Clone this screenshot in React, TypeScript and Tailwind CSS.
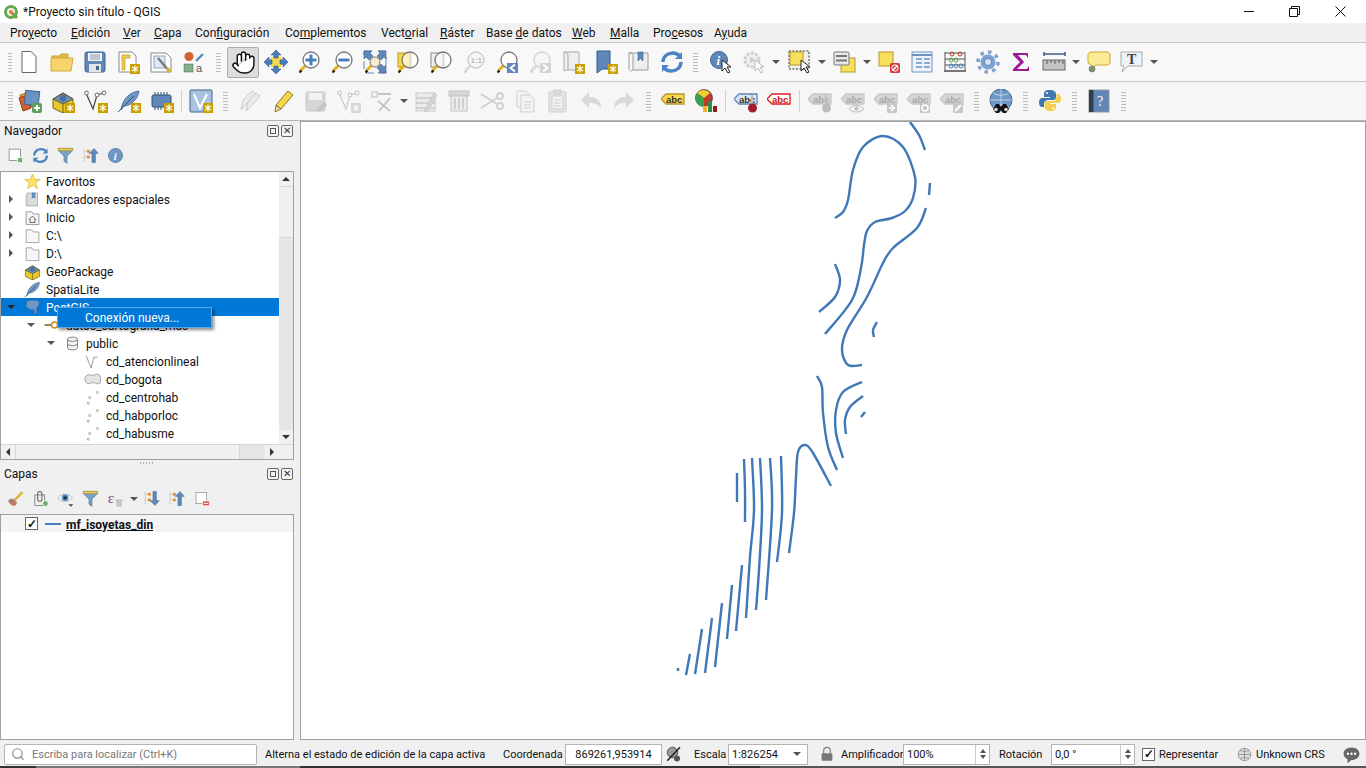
import type { ReactNode } from 'react'
import { Hand, Search } from 'lucide-react'

const FONT = "font-['Roboto','Noto_Sans',sans-serif]"

function smooth(p: number[][]) {
  let d = `M${p[0][0]} ${p[0][1]}`
  for (let i = 0; i < p.length - 1; i++) {
    const a = p[Math.max(i - 1, 0)]
    const b = p[i]
    const c = p[i + 1]
    const e = p[Math.min(i + 2, p.length - 1)]
    d += ` C${b[0] + (c[0] - a[0]) / 6} ${b[1] + (c[1] - a[1]) / 6} ${c[0] - (e[0] - b[0]) / 6} ${c[1] - (e[1] - b[1]) / 6} ${c[0]} ${c[1]}`
  }
  return d
}

const isolines = [
  [[835, 218], [843, 212], [848, 200], [853, 170], [863, 147], [883, 136], [903, 147], [915, 177], [913, 198], [905, 211], [892, 218], [875, 222], [867, 231], [864, 245], [861, 268], [852, 300], [825, 334]],
  [[910, 122], [919, 135], [925, 150]],
  [[930, 183], [929, 195]],
  [[926, 208], [917, 228], [893, 248], [883, 263], [867, 297], [847, 330], [842, 350], [848, 365], [862, 365]],
  [[835, 264], [840, 280], [835, 297], [819, 312]],
  [[877, 322], [873, 330], [874, 337]],
  [[817, 376], [822, 387], [823, 413], [828, 447], [837, 470]],
  [[862, 382], [843, 392], [836, 410], [836, 433], [843, 458]],
  [[863, 396], [850, 407], [845, 420], [846, 434]],
  [[865, 412], [861, 417]],
  [[831, 486], [813, 453], [805, 445], [798, 452], [796, 477], [794, 513], [789, 553]],
  [[737, 473], [737, 502]],
  [[744, 459], [745, 490], [745, 522]],
  [[752, 458], [754, 510], [750, 557], [746, 618]],
  [[760, 458], [762, 510], [759, 570], [756, 610]],
  [[770, 458], [772, 510], [766, 600]],
  [[781, 456], [782, 513], [777, 562]],
  [[742, 565], [736, 631]],
  [[732, 585], [727, 639]],
  [[722, 603], [715, 667]],
  [[712, 618], [705, 673]],
  [[702, 629], [695, 674]],
  [[690, 654], [686, 675]],
  [[678, 668], [678, 671]],
]

const Badge = ({ c = '#c9a000' }: { c?: string }) => (
  <g>
    <rect x="14" y="14" width="10" height="10" fill={c} />
    <path d="M19 15.5v7M16 17l6 4M22 17l-6 4" stroke="#fff" strokeWidth="1.2" />
  </g>
)

const Lens = ({ fill = '#fff', ring = '#777', handle = '#e8b020', tip = '#111' }) => (
  <g>
    <path d="M9 15 3 21" stroke={handle} strokeWidth="3" />
    <path d="M4.5 20.5 2.5 22.5" stroke={tip} strokeWidth="2" />
    <circle cx="14" cy="10" r="8" fill={fill} stroke={ring} strokeWidth="1.3" />
  </g>
)

const Cursor = () => <path d="M13 10v11l3-3 3 5 2-1-3-5h4z" fill="#fff" stroke="#222" strokeWidth="1" />

const Abc = ({ fill, stroke, color = '#333' }: { fill: string; stroke: string; color?: string }) => (
  <g>
    <path d="M0 10 5 5h18v10H5z" fill={fill} stroke={stroke} strokeWidth="1.3" />
    <text x="5" y="13.5" fontSize="9.5" fontWeight="700" fill={color} fontFamily="Liberation Sans, sans-serif">abc</text>
  </g>
)

const Vnodes = ({ c = '#444', n = '#888' }) => (
  <g fill="#fff" stroke={c} strokeWidth="1.2">
    <path d="M2 4 9 20 13 6 20 4" fill="none" />
    <circle cx="2.5" cy="4" r="1.8" stroke={n} />
    <circle cx="13" cy="6" r="1.8" stroke={n} />
    <circle cx="20" cy="4" r="1.8" stroke={n} />
  </g>
)

const Feather = ({ c = '#6f97c6' }) => (
  <g>
    <path d="M4 21C5 11 12 3 22 2 21 10 14 17 7 17Z" fill={c} stroke="#3e668f" strokeWidth=".8" />
    <path d="M1 23 17 7" stroke="#2e4f72" strokeWidth="1" />
  </g>
)

const GeoBox = () => (
  <g>
    <path d="M2 10 12 4l10 6v9l-10 5-10-5z" fill="#e7c92c" stroke="#7a6510" />
    <path d="M2 10l10 5 10-5-10-6z" fill="#6d8fb8" stroke="#4a3d10" strokeWidth=".7" />
    <path d="M12 15v9" stroke="#7a6510" />
    <circle cx="12" cy="9" r="3.4" fill="#4a6f9d" />
  </g>
)

const gray = { f: '#ececec', s: '#c9c9c9', d: '#d6d6d6' }

const icons: Record<string, ReactNode> = {
  new: <path d="M5 1.5h9l5 5v16H5z" fill="#fff" stroke="#666" />,
  open: (
    <g>
      <path d="M2 6h7l2-2h7v4H2z" fill="#e6bc3f" stroke="#c9a53a" />
      <path d="M1 21V8h22l-2 13z" fill="#f7d56b" stroke="#d0aa40" />
    </g>
  ),
  save: (
    <g>
      <rect x="2" y="2" width="20" height="20" rx="2" fill="#5f88b8" stroke="#3f6690" />
      <rect x="5" y="3" width="14" height="8" fill="#eef1f5" />
      <path d="M7 5h10M7 7h10M7 9h10" stroke="#8b9bb0" />
      <rect x="6" y="14" width="12" height="8" fill="#e4e4e4" />
      <rect x="13" y="16" width="3" height="4" fill="#3f6690" />
    </g>
  ),
  layoutNew: (
    <g>
      <path d="M3 2h13l4 4v16H3z" fill="#fff" stroke="#888" />
      <path d="M6 5h8v3H9v12H6z" fill="#f0ce50" stroke="#b8962a" strokeWidth=".7" />
      <Badge />
    </g>
  ),
  layoutMgr: (
    <g>
      <path d="M2 3h15l5 5v14H2z" fill="#fff" stroke="#888" />
      <rect x="5" y="6" width="11" height="12" fill="#dfe9f5" stroke="#8aa6c8" />
      <path d="M9 8 20 21" stroke="#777" strokeWidth="2.4" />
      <path d="M18 18l4 4" stroke="#dcb63c" strokeWidth="3" />
    </g>
  ),
  style: (
    <g>
      <circle cx="7" cy="6.5" r="4.5" fill="#d2622f" />
      <path d="M14 11 21 4" stroke="#5f88b8" strokeWidth="2.4" />
      <rect x="2" y="14" width="9" height="8" fill="#7fb08a" stroke="#557" strokeWidth=".5" />
      <text x="14" y="22" fontSize="11" fill="#555" fontFamily="Liberation Sans, sans-serif">a</text>
    </g>
  ),
  panSel: (
    <g>
      <path d="M12 4 20 12 12 20 4 12z" fill="#f6d94a" stroke="#b8962a" />
      <rect x="7" y="7" width="10" height="10" fill="#f6d94a" />
      <path d="M12 0l5 5h-3v3h-4V5H7zM12 24l5-5h-3v-3h-4v3H7zM0 12l5-5v3h3v4H5v3zM24 12l-5-5v3h-3v4h3v3z" fill="#4a7fbe" stroke="#2f5c8c" strokeWidth=".6" />
    </g>
  ),
  zoomIn: (
    <g>
      <Lens />
      <path d="M8.5 10h11M14 4.500v11" stroke="#4a7fbe" strokeWidth="3" />
    </g>
  ),
  zoomOut: (
    <g>
      <Lens />
      <path d="M8.5 10h11" stroke="#4a7fbe" strokeWidth="3" />
    </g>
  ),
  zoomFull: (
    <g>
      <rect x="1" y="1" width="22" height="22" fill="none" stroke="#5f88b8" strokeWidth="1" strokeDasharray="8 6" />
      <path d="M1 1h8L7 3l3 3-4 4-3-3-2 2zM23 1h-8l2 2-3 3 4 4 3-3 2 2zM23 23h-8l2-2-3-3 4-4 3 3 2-2z" fill="#5f88b8" stroke="#3f6690" strokeWidth=".6" />
      <path d="M9 15 3 21" stroke="#e8b020" strokeWidth="3" />
      <path d="M4.500 20.500 2.500 22.500" stroke="#111" strokeWidth="2" />
      <circle cx="12" cy="12" r="5" fill="#f3eccd" stroke="#777" />
    </g>
  ),
  zoomSel: (
    <g>
      <rect x="2" y="3" width="13" height="14" fill="#f6d94a" stroke="#b8962a" />
      <Lens fill="#ffffffaa" />
      <path d="M14 3v14" stroke="#ccc" />
    </g>
  ),
  zoomLayer: (
    <g>
      <rect x="2" y="3" width="13" height="14" fill="#eee" stroke="#888" />
      <Lens fill="#ffffffaa" />
      <path d="M14 3v14" stroke="#ccc" />
    </g>
  ),
  zoom11: (
    <g>
      <Lens fill="#f6f6f6" ring="#c8c8c8" handle="#ddd" tip="#ccc" />
      <text x="8.5" y="13" fontSize="8" fontWeight="700" fill="#bbb" fontFamily="Liberation Sans, sans-serif">1:1</text>
    </g>
  ),
  zoomLast: (
    <g>
      <Lens />
      <rect x="12" y="13" width="11" height="10" fill="#5f88b8" />
      <path d="M20 14.500 15.500 18l4.500 3.500" fill="none" stroke="#fff" strokeWidth="2" />
    </g>
  ),
  zoomNext: (
    <g>
      <Lens fill="#f6f6f6" ring="#d0d0d0" handle="#ddd" tip="#ccc" />
      <rect x="12" y="13" width="11" height="10" fill="#d4d4d4" />
      <path d="M15 14.500 19.500 18 15 21.500" fill="none" stroke="#fff" strokeWidth="2" />
    </g>
  ),
  mapNew: (
    <g>
      <path d="M3 2h15v18H7c-3 0-4 2-4 0z" fill="#eee" stroke="#aaa" />
      <path d="M3 2c3 0 4 2 4 4v14" fill="none" stroke="#aaa" />
      <Badge />
    </g>
  ),
  bmNew: (
    <g>
      <path d="M3 1h13v18H8l-5 4z" fill="#5f88b8" stroke="#2f5c8c" />
      <Badge />
    </g>
  ),
  bookmarks: (
    <g>
      <path d="M2 3c3-1 4 1 4 3v14h15V3z" fill="#eee" stroke="#999" />
      <path d="M2 3v15c0 2 2 4 4 2" fill="none" stroke="#999" />
      <path d="M11 2h5v9l-2.500-2.500L11 11z" fill="#5f88b8" stroke="#3f6690" strokeWidth=".6" />
    </g>
  ),
  refresh: (
    <g fill="none" stroke="#4a84c4" strokeWidth="3.400">
      <path d="M3 12C3 6 8 3 13 3c3 0 5 1 7 3" />
      <path d="M21 12c0 6-5 9-10 9-3 0-5-1-7-3" />
      <path d="M22 2v7h-7zM2 22v-7h7z" fill="#4a84c4" stroke="none" />
    </g>
  ),
  identify: (
    <g>
      <circle cx="10" cy="10" r="8.500" fill="#5f88b8" stroke="#3f6690" />
      <text x="7.500" y="15" fontSize="13" fontWeight="700" fontStyle="italic" fill="#fff" fontFamily="Liberation Serif, serif">i</text>
      <Cursor />
    </g>
  ),
  action: (
    <g>
      <circle cx="10" cy="10" r="7" fill="#eee" stroke="#d0d0d0" strokeWidth="3" strokeDasharray="3 1.500" />
      <path d="M8 6.500v7l5-3.500z" fill="#ccc" />
      <path d="M13 10v11l3-3 3 5 2-1-3-5h4z" fill="#fff" stroke="#bbb" />
    </g>
  ),
  select: (
    <g>
      <rect x="1" y="1" width="20" height="18" fill="#f0f0f0" stroke="#333" strokeDasharray="2 1.500" />
      <rect x="2" y="2" width="13" height="13" fill="#f6e05a" stroke="#b8962a" />
      <Cursor />
    </g>
  ),
  form: (
    <g>
      <rect x="8" y="8" width="14" height="14" fill="#f6e05a" stroke="#b8962a" />
      <rect x="1" y="2" width="15" height="13" rx="1" fill="#e9e9e9" stroke="#777" />
      <path d="M3 6h11M3 10.500h11" stroke="#777" strokeWidth="2" />
    </g>
  ),
  deselect: (
    <g>
      <rect x="2" y="2" width="14" height="14" fill="#f6e05a" stroke="#b8962a" />
      <rect x="13" y="13" width="10" height="10" rx="1.500" fill="#d83a3a" />
      <path d="M15.500 20.500l5-5" stroke="#fff" strokeWidth="1.600" />
      <circle cx="18" cy="18" r="3.200" fill="none" stroke="#fff" />
    </g>
  ),
  table: (
    <g>
      <rect x="2" y="2" width="20" height="20" fill="#eef3f9" stroke="#6a93c1" />
      <path d="M2 5h20" stroke="#6a93c1" strokeWidth="2" />
      <path d="M6 9h6M14 9h6M6 13h6M14 13h6M6 17h6M14 17h6" stroke="#6a93c1" strokeWidth="1.400" />
    </g>
  ),
  abacus: (
    <g fill="none">
      <path d="M2 2v18M22 2v18M2 3h20M2 9h20M2 15h20" stroke="#555" />
      <rect x="1" y="20" width="22" height="2" fill="#777" />
      <circle cx="9" cy="4" r="2" stroke="#c0392b" />
      <circle cx="17" cy="4" r="2" stroke="#c0392b" />
      <circle cx="8" cy="10" r="2" stroke="#5aa05a" />
      <circle cx="13" cy="10" r="2" stroke="#5aa05a" />
      <circle cx="8" cy="16" r="2" stroke="#4a7fbe" />
      <circle cx="13" cy="16" r="2" stroke="#4a7fbe" />
      <circle cx="18" cy="16" r="2" stroke="#4a7fbe" />
    </g>
  ),
  gear: (
    <g>
      <circle cx="12" cy="12" r="7.500" fill="#7ea2d0" />
      <circle cx="12" cy="12" r="10" fill="none" stroke="#7ea2d0" strokeWidth="3.500" strokeDasharray="3.500 4.300" />
      <circle cx="12" cy="12" r="3.500" fill="#dce7f5" stroke="#5f88b8" />
    </g>
  ),
  sigma: <path d="M4 3h15v5l-2-3H9l6 7-7 7h10l2-3v5H4v-2l7-7-7-7z" fill="#a0189a" />,
  ruler: (
    <g>
      <path d="M2 4h21M2 2v4M23 2v4" stroke="#3f5f88" strokeWidth="1.500" />
      <rect x="1" y="10" width="22" height="10" fill="#c4c4c4" stroke="#666" />
      <path d="M5 10v4M9 10v3M13 10v4M17 10v3M21 10v4" stroke="#555" />
    </g>
  ),
  bubble: (
    <g>
      <path d="M3 2h18l2 2v9l-2 2H9l-3 2-2-2-3-2V4z" fill="#fbeb96" stroke="#cfa82e" />
      <circle cx="5" cy="19" r="3" fill="#7a9a6a" stroke="#557" strokeWidth=".5" />
    </g>
  ),
  textAnn: (
    <g>
      <path d="M1 2h21v14H8l-6 6 2-6H1z" fill="#eef3f7" stroke="#aaa" />
      <text x="7" y="14" fontSize="14" fontWeight="700" fill="#444" fontFamily="Liberation Serif, serif">T</text>
    </g>
  ),
  dsm: (
    <g>
      <path d="M2 6 12 3l3 14-9 4z" fill="#e2a43c" stroke="#a06a1c" />
      <path d="M1 9l9-3 3 13-8 3z" fill="#d2622f" stroke="#8f3d15" />
      <rect x="7" y="2" width="14" height="14" fill="#6a93c1" stroke="#3f6690" transform="rotate(6 14 9)" />
      <rect x="14" y="14" width="10" height="10" rx="2" fill="#5aa05a" />
      <path d="M19 16v6M16 19h6" stroke="#fff" strokeWidth="2" />
    </g>
  ),
  gpkgNew: (
    <g>
      <GeoBox />
      <Badge />
    </g>
  ),
  shpNew: (
    <g>
      <Vnodes />
      <Badge />
    </g>
  ),
  spatNew: (
    <g>
      <Feather />
      <Badge />
    </g>
  ),
  tempNew: (
    <g>
      <rect x="2" y="6" width="19" height="12" rx="1.500" fill="#5f88b8" stroke="#2f4f72" />
      <path d="M5 3v3M8 3v3M11 3v3M14 3v3M17 3v3M5 18v3M8 18v3M11 18v3" stroke="#2f4f72" />
      <Badge />
    </g>
  ),
  virtNew: (
    <g>
      <rect x="1" y="1" width="22" height="22" rx="1" fill="#a9c3df" stroke="#3f6690" />
      <path d="M5 5 11 19 18 5" fill="none" stroke="#fff" strokeWidth="2" />
      <Badge />
    </g>
  ),
  pencils: (
    <g fill={gray.f} stroke={gray.s}>
      <path d="M3 21 5 11l9-9 4 3-9 9z" />
      <path d="M8 22l2-9 8-9 4 3-8 9z" />
    </g>
  ),
  pencil: (
    <g>
      <path d="M5 16 17 2l5 4-12 14z" fill="#f3d64a" stroke="#8a7a20" />
      <path d="M5 16l5 4-6 3z" fill="#e9d9b0" stroke="#8a7a20" />
    </g>
  ),
  saveG: (
    <g>
      <rect x="2" y="3" width="19" height="19" rx="1.500" fill={gray.d} stroke={gray.s} />
      <rect x="5" y="4" width="13" height="7" fill="#f2f2f2" />
      <path d="M12 21l8-8 3 3-8 7z" fill="#c4c4c4" />
    </g>
  ),
  vG: (
    <g>
      <Vnodes c={gray.s} n={gray.s} />
      <rect x="14" y="14" width="10" height="10" fill={gray.d} />
      <path d="M19 15.500v7M16 17l6 4M22 17l-6 4" stroke="#fff" />
    </g>
  ),
  toolG: (
    <g fill="none" stroke="#c4c4c4" strokeWidth="1.200">
      <rect x="2" y="3" width="5" height="5" />
      <path d="M8 5h13M8 12l12 10M20 9 9 22" strokeWidth="1.800" />
    </g>
  ),
  tableG: (
    <g>
      <rect x="2" y="4" width="19" height="18" fill={gray.f} stroke={gray.s} />
      <path d="M2 9h19M2 14h19M2 19h19" stroke={gray.s} strokeWidth="1.500" />
      <path d="M10 22 20 4l3 2-10 17z" fill={gray.d} stroke={gray.s} />
    </g>
  ),
  trash: (
    <g fill={gray.d} stroke="#c4c4c4">
      <rect x="2" y="2" width="20" height="5" />
      <rect x="4" y="7" width="16" height="15" fill={gray.f} />
      <path d="M8 9v11M12 9v11M16 9v11" strokeWidth="1.500" />
    </g>
  ),
  scissors: (
    <g fill="none" stroke="#cfcfcf" strokeWidth="1.800">
      <path d="M1 5 17 15M1 19 17 9" />
      <circle cx="20" cy="7" r="3" />
      <circle cx="20" cy="17" r="3" />
    </g>
  ),
  copy: (
    <g fill="#f4f4f4" stroke="#cfcfcf">
      <path d="M4 2h9l4 4v12H4z" />
      <path d="M8 6h9l4 4v13H8z" />
      <path d="M11 13h7M11 16h7M11 19h7" />
    </g>
  ),
  paste: (
    <g fill="#f4f4f4" stroke="#cfcfcf">
      <rect x="3" y="3" width="17" height="20" rx="1" fill="#e4e4e4" />
      <rect x="6" y="7" width="11" height="13" />
      <rect x="8" y="1" width="7" height="4" fill="#ddd" />
      <path d="M8 11h7M8 14h7M8 17h7" />
    </g>
  ),
  undo: <path d="M2 11 10 3v5c7 0 12 3 12 12-3-5-6-6-12-6v5z" fill="#d8d8d8" />,
  redo: <path d="M22 11 14 3v5C7 8 2 11 2 20c3-5 6-6 12-6v5z" fill="#d8d8d8" />,
  abcY: <Abc fill="#f6d94a" stroke="#b8962a" />,
  diagram: (
    <g>
      <circle cx="10" cy="9" r="8.500" fill="#c0392b" stroke="#333" strokeWidth=".6" />
      <path d="M10 9 3 4a8.500 8.500 0 0 1 13 0z" fill="#f0d030" />
      <path d="M10 9 10 17.500A8.500 8.500 0 0 1 3 4z" fill="#3aa050" />
      <rect x="9" y="17" width="4" height="6" fill="#f0b030" />
      <rect x="14" y="12" width="4" height="11" fill="#2f8f4a" />
      <rect x="19" y="17" width="4" height="6" fill="#8f1f1f" />
    </g>
  ),
  abcB: (
    <g>
      <Abc fill="#dbe8f6" stroke="#5f88b8" />
      <rect x="17" y="6" width="2" height="10" fill="#bbb" />
      <circle cx="18.500" cy="19" r="4.500" fill="#a01f2a" />
    </g>
  ),
  abcR: <Abc fill="#fff" stroke="#e02020" color="#d01818" />,
  abcPin: (
    <g>
      <Abc fill={gray.d} stroke="#c8c8c8" color="#a8a8a8" />
      <rect x="17" y="6" width="2" height="10" fill="#bbb" />
      <circle cx="18.500" cy="19" r="4.500" fill="#bdbdbd" />
    </g>
  ),
  abcEye: (
    <g>
      <Abc fill={gray.d} stroke="#c8c8c8" color="#a8a8a8" />
      <path d="M8 20c4-5 10-5 15 0-5 4-11 4-15 0z" fill="#f4f4f4" stroke="#bbb" />
      <circle cx="15.500" cy="19.500" r="2" fill="#bbb" />
    </g>
  ),
  abcMove: (
    <g>
      <Abc fill={gray.d} stroke="#c8c8c8" color="#a8a8a8" />
      <rect x="13" y="14" width="10" height="10" rx="1" fill="#c8c8c8" />
      <path d="M15 19h4M17 16l3.500 3-3.500 3" stroke="#fff" strokeWidth="1.500" fill="none" />
    </g>
  ),
  abcRot: (
    <g>
      <Abc fill={gray.d} stroke="#c8c8c8" color="#a8a8a8" />
      <rect x="13" y="14" width="10" height="10" rx="1" fill="#c8c8c8" />
      <circle cx="18" cy="19" r="3" fill="none" stroke="#fff" strokeWidth="1.500" />
    </g>
  ),
  abcEdit: (
    <g>
      <Abc fill={gray.d} stroke="#c8c8c8" color="#a8a8a8" />
      <rect x="13" y="14" width="10" height="10" rx="1" fill="#c8c8c8" />
      <path d="M15 22l6-6" stroke="#fff" strokeWidth="2" />
    </g>
  ),
  globe: (
    <g>
      <circle cx="12" cy="11" r="11" fill="#6f97c6" stroke="#3f6690" />
      <path d="M1 11h22M12 0v22M4 4c5 3 11 3 16 0M4 18c5-3 11-3 16 0" stroke="#dbe6f2" strokeWidth=".7" fill="none" />
      <path d="M7 15h3l2 3 2-3h3l3 5-3 4h-3l-2-3-2 3H7l-3-4z" fill="#111" />
      <circle cx="7" cy="20.500" r="1.800" fill="#ddd" />
      <circle cx="17" cy="20.500" r="1.800" fill="#ddd" />
    </g>
  ),
  python: (
    <g>
      <path d="M11.500 1C7 1 6 3 6 5v3h6v1H4c-2 0-3 2-3 4.500S2 18 4 18h2v-3c0-2 2-4 4-4h5c2 0 3-1 3-3V5c0-2-2-4-6.500-4z" fill="#3f79ad" />
      <path d="M12.500 22c4 0 5.500-2 5.500-4v-3h-6v-1h8c2 0 3-2 3-4.500S22 5 20 5h-1.500v3c0 2-2 4-4 4h-5c-2 0-3 1-3 3v3c0 2 2 4 6 4z" fill="#f5d04e" />
      <circle cx="9" cy="4" r="1" fill="#fff" />
      <circle cx="15" cy="19" r="1" fill="#fff" />
    </g>
  ),
  help: (
    <g>
      <rect x="2" y="1" width="20" height="22" fill="#5f88b8" stroke="#999" />
      <rect x="2" y="1" width="4.500" height="22" fill="#2e3f52" />
      <text x="10" y="17" fontSize="14" fill="#fff" fontFamily="Liberation Serif, serif">?</text>
    </g>
  ),
  star: <path d="M12 1.500 15 9h8l-6.500 5 2.500 8-7-4.700L5 22l2.500-8L1 9h8z" fill="#fbe36a" stroke="#d8b32c" />,
  bookmarkSm: (
    <g>
      <path d="M5 3h14v18H5z" fill="#ddd" stroke="#999" />
      <path d="M5 3c-2 1-2 2-2 4v14l2-1" fill="#eee" stroke="#999" />
      <path d="M11 2h5v9l-2.500-2-2.500 2z" fill="#5f88b8" />
    </g>
  ),
  folder: <path d="M3 4h8l2 3h8v15H3z" fill="#f6f6f6" stroke="#888" />,
  home: (
    <g>
      <path d="M3 4h8l2 3h8v15H3z" fill="#f6f6f6" stroke="#777" />
      <path d="M7 15l5-5 5 5M8.500 14v5h7v-5" fill="none" stroke="#333" />
    </g>
  ),
  box: <GeoBox />,
  feather: <Feather />,
  elephant: <path d="M4 3c6-2 12-2 17 0 2 3 0 7-3 9v6c0 3-3 4-4 1v-4c-3 1-6 0-7-2-3 0-5-2-4-5z" fill="#6f97c6" stroke="#2f5c8c" strokeWidth=".8" />,
  conn: (
    <g fill="none" stroke="#8a5a14" strokeWidth="2">
      <path d="M1 12h9" />
      <circle cx="14" cy="12" r="4" stroke="#d08a20" />
    </g>
  ),
  db: (
    <g fill="#f4f4f4" stroke="#777" strokeWidth="1.300">
      <path d="M5 6c0-4 14-4 14 0v12c0 4-14 4-14 0z" />
      <path d="M5 6c0 4 14 4 14 0M5 12c0 4 14 4 14 0" />
    </g>
  ),
  lineLyr: <path d="M3 4 10 21 14 6h5" fill="none" stroke="#888" strokeWidth="1.200" />,
  polyLyr: <path d="M2 8c3-4 7-2 10-2s7-3 10 0 1 8 1 10-4 3-7 1-7 1-10 1-6-6-4-10z" fill="#e4e4e4" stroke="#888" />,
  ptLyr: (
    <g fill="#fff" stroke="#888">
      <circle cx="6" cy="20" r="1.500" />
      <circle cx="8" cy="12" r="1.500" />
      <circle cx="19" cy="5" r="1.500" />
    </g>
  ),
  addGroup: (
    <g>
      <rect x="3" y="3" width="16" height="16" fill="#fff" stroke="#777" />
      <rect x="15" y="15" width="7" height="7" rx="1" fill="#6faa6f" stroke="#fff" />
    </g>
  ),
  funnel: (
    <g>
      <path d="M2 2h20v3l-8 8v10l-4-3v-7L2 5z" fill="#7ea2c6" stroke="#47709a" />
      <path d="M2 2h20v3H2z" fill="#f0d060" stroke="#b8962a" />
    </g>
  ),
  collapse: (
    <g>
      <path d="M3 3v18M3 6h6M3 14h6" stroke="#aaa" fill="none" strokeDasharray="2 1" />
      <rect x="7" y="4" width="4" height="4" fill="#e89030" />
      <rect x="7" y="12" width="4" height="4" fill="#e89030" />
      <path d="M17 2l6 7h-4v13h-5V9h-4z" fill="#5f88b8" stroke="#2f5c8c" strokeWidth=".6" />
    </g>
  ),
  expand: (
    <g>
      <path d="M3 3v18M3 6h6M3 14h6" stroke="#aaa" fill="none" strokeDasharray="2 1" />
      <rect x="7" y="4" width="4" height="4" fill="#e89030" />
      <rect x="7" y="12" width="4" height="4" fill="#e89030" />
      <path d="M17 22l6-7h-4V2h-5v13h-4z" fill="#5f88b8" stroke="#2f5c8c" strokeWidth=".6" />
    </g>
  ),
  infoSm: (
    <g>
      <circle cx="12" cy="12" r="10" fill="#6f97c6" stroke="#47709a" />
      <text x="9.500" y="18" fontSize="15" fontWeight="700" fontStyle="italic" fill="#fff" fontFamily="Liberation Serif, serif">i</text>
    </g>
  ),
  brush: (
    <g>
      <path d="M2 15c4-3 7-3 10 0s1 6-2 7c-3 0-7-3-8-7z" fill="#d9785a" stroke="#8a7a40" strokeWidth=".6" />
      <path d="M4 13l5 6" stroke="#5f88b8" strokeWidth="2" />
      <path d="M11 14 22 3" stroke="#dcb63c" strokeWidth="3.500" />
    </g>
  ),
  addLegend: (
    <g fill="none" stroke="#666">
      <rect x="4" y="7" width="14" height="15" fill="#eee" />
      <rect x="8" y="2" width="6" height="14" rx="3" strokeWidth="1.500" />
      <circle cx="19" cy="19" r="4" fill="#6faa6f" stroke="#fff" />
    </g>
  ),
  eye: (
    <g>
      <path d="M1 11c6-7 14-7 21 0-7 7-15 7-21 0z" fill="#eef1f5" stroke="#aaa" />
      <circle cx="11.500" cy="11" r="4.500" fill="#4a7fbe" />
      <circle cx="11.500" cy="11" r="2" fill="#222" />
      <path d="M16 20h7l-3.500 3.500z" fill="#444" />
    </g>
  ),
  filterLegend: (
    <g>
      <text x="1" y="18" fontSize="22" fill="#7a4d8c" fontFamily="Liberation Serif, serif">ε</text>
      <path d="M12 14h10l-2 3v6h-6v-6z" fill="#ccc" stroke="#999" strokeWidth=".6" />
    </g>
  ),
  removeLayer: (
    <g>
      <rect x="3" y="2" width="16" height="17" fill="#fff" stroke="#888" />
      <rect x="13" y="15" width="10" height="7" rx="1" fill="#e04848" stroke="#fff" />
      <path d="M15 18.500h6" stroke="#fff" strokeWidth="1.500" />
    </g>
  ),
  pluginMsg: (
    <g>
      <path d="M12 3c6 0 10 3.500 10 8s-4 8-10 8l-5 4v-5c-3-1.500-5-4-5-7 0-4.500 4-8 10-8z" fill="#666" />
      <circle cx="7.500" cy="11" r="1.500" fill="#fff" />
      <circle cx="12" cy="11" r="1.500" fill="#fff" />
      <circle cx="16.500" cy="11" r="1.500" fill="#fff" />
    </g>
  ),
  crs: (
    <g>
      <circle cx="12" cy="12" r="10" fill="#ddd" stroke="#777" />
      <path d="M2 12h20M12 2v20M5 5c4 3 10 3 14 0M5 19c4-3 10-3 14 0" stroke="#777" fill="none" />
    </g>
  ),
  render: (
    <g>
      <circle cx="10" cy="10" r="7" fill="#999" stroke="#333" />
      <path d="M3 21 20 3" stroke="#222" strokeWidth="2" />
      <circle cx="16" cy="18" r="4" fill="#555" />
    </g>
  ),
  lock: (
    <g>
      <path d="M7 11V7a5 5 0 0 1 10 0v4" fill="none" stroke="#888" strokeWidth="2" />
      <rect x="4" y="11" width="16" height="11" rx="1.500" fill="#777" />
    </g>
  ),
}

function Icon({ name, size = 24 }: { name: string; size?: number }) {
  return (
    <svg width={size} height={size} viewBox="0 0 24 24" className="shrink-0">
      {icons[name]}
    </svg>
  )
}

const Caret = () => (
  <span className="inline-block h-0 w-0 border-x-[4px] border-t-[4px] border-x-transparent border-t-[#555]" />
)

const Grip = ({ w }: { w: number }) => (
  <div className="flex shrink-0 justify-center" style={{ width: w }}>
    <div className="h-[20px] w-[5px] bg-[radial-gradient(circle,#b5b5b5_0.8px,transparent_1px)] bg-[length:2.5px_3px]" />
  </div>
)

const Sep = ({ w }: { w: number }) => (
  <div className="flex shrink-0 justify-center" style={{ width: w }}>
    <div className="h-[22px] w-px bg-[#d0d0d0]" />
  </div>
)

type Tool = string | { g: number } | { s: number } | { d: number } | { x: number }

function ToolRow({ tools }: { tools: Tool[] }) {
  return (
    <div className="flex h-full items-center">
      {tools.map((t, i) => {
        if (typeof t === 'string') {
          if (t === 'pan') {
            return (
              <div key={i} className="flex h-[31px] w-[32px] shrink-0 items-center justify-center rounded-[2px] border border-[#ababab] bg-[#dcdcdc]">
                <Hand size={25} fill="#fff" strokeWidth={1.4} color="#111" />
              </div>
            )
          }
          return (
            <div key={i} className="flex h-[33px] w-[33px] shrink-0 items-center justify-center">
              <Icon name={t} />
            </div>
          )
        }
        if ('g' in t) return <Grip key={i} w={t.g} />
        if ('s' in t) return <Sep key={i} w={t.s} />
        if ('x' in t) return <div key={i} className="shrink-0" style={{ width: t.x }} />
        return (
          <div key={i} className="flex shrink-0 justify-center" style={{ width: t.d }}>
            <Caret />
          </div>
        )
      })}
    </div>
  )
}

const row1: Tool[] = [
  { x: 8 }, { g: 4 }, 'new', 'open', 'save', 'layoutNew', 'layoutMgr', 'style', { g: 16 },
  { x: 1 }, 'pan', 'panSel', 'zoomIn', 'zoomOut', 'zoomFull', 'zoomSel', 'zoomLayer', 'zoom11', 'zoomLast', 'zoomNext',
  'mapNew', 'bmNew', 'bookmarks', 'refresh', { g: 15 }, { x: 1 }, 'identify', 'action', { d: 11 }, { x: 2 }, 'select', { d: 12 },
  'form', { d: 11 }, 'deselect', 'table', 'abacus', 'gear', 'sigma', 'ruler', { d: 12 }, 'bubble', 'textAnn', { d: 12 },
]

const row2: Tool[] = [
  { x: 8 }, { g: 5 }, 'dsm', 'gpkgNew', 'shpNew', 'spatNew', 'tempNew', { s: 6 }, 'virtNew', { g: 16 },
  'pencils', 'pencil', 'saveG', 'vG', 'toolG', { d: 11 }, 'tableG', 'trash', 'scissors', 'copy', 'paste', 'undo', 'redo', { g: 16 },
  'abcY', 'diagram', { s: 7 }, 'abcB', 'abcR', { s: 8 }, 'abcPin', 'abcEye', 'abcMove', 'abcRot', 'abcEdit', { g: 16 },
  'globe', { g: 16 }, 'python', { g: 16 }, 'help', { g: 16 },
]

const menus: [string, string, string, number][] = [
  ['Pro', 'y', 'ecto', 61], ['', 'E', 'dición', 52], ['', 'V', 'er', 31], ['', 'C', 'apa', 41], ['Con', 'f', 'iguración', 90],
  ['Co', 'm', 'plementos', 96], ['Vect', 'o', 'rial', 59], ['', 'R', 'áster', 46], ['Base ', 'd', 'e datos', 86], ['', 'W', 'eb', 38],
  ['', 'M', 'alla', 43], ['Pro', 'c', 'esos', 61], ['A', 'y', 'uda', 40],
]

function DockHeader({ title }: { title: string }) {
  return (
    <div className="flex h-[18px] items-center justify-between pl-[4px] pr-[1px]">
      <span>{title}</span>
      <div className="flex gap-[2px]">
        <div className="flex h-[12px] w-[12px] items-center justify-center rounded-[2px] border border-[#666] bg-[#f4f4f4]">
          <div className="h-[6px] w-[6px] border border-[#555]" />
        </div>
        <div className="flex h-[12px] w-[12px] items-center justify-center rounded-[2px] border border-[#666] bg-[#f4f4f4] text-[10px] leading-none text-[#333]">
          ✕
        </div>
      </div>
    </div>
  )
}

const tree: { t: string; ic: string; lv: number; ar?: 'r' | 'd'; sel?: boolean }[] = [
  { t: 'Favoritos', ic: 'star', lv: 0 },
  { t: 'Marcadores espaciales', ic: 'bookmarkSm', lv: 0, ar: 'r' },
  { t: 'Inicio', ic: 'home', lv: 0, ar: 'r' },
  { t: 'C:\\', ic: 'folder', lv: 0, ar: 'r' },
  { t: 'D:\\', ic: 'folder', lv: 0, ar: 'r' },
  { t: 'GeoPackage', ic: 'box', lv: 0 },
  { t: 'SpatiaLite', ic: 'feather', lv: 0 },
  { t: 'PostGIS', ic: 'elephant', lv: 0, ar: 'd', sel: true },
  { t: 'datos_cartografia_mas', ic: 'conn', lv: 1, ar: 'd' },
  { t: 'public', ic: 'db', lv: 2, ar: 'd' },
  { t: 'cd_atencionlineal', ic: 'lineLyr', lv: 3 },
  { t: 'cd_bogota', ic: 'polyLyr', lv: 3 },
  { t: 'cd_centrohab', ic: 'ptLyr', lv: 3 },
  { t: 'cd_habporloc', ic: 'ptLyr', lv: 3 },
  { t: 'cd_habusme', ic: 'ptLyr', lv: 3 },
]

function TreeRow({ r }: { r: (typeof tree)[number] }) {
  return (
    <div className={`flex h-[18px] items-center ${r.sel ? 'bg-[#0078d7] text-[#fff]' : ''}`} style={{ paddingLeft: r.lv * 20 }}>
      <div className="flex w-[20px] shrink-0 justify-center">
        {r.ar === 'r' && <span className="h-0 w-0 border-y-[4px] border-l-[4px] border-y-transparent border-l-[#555]" />}
        {r.ar === 'd' && <span className={`h-0 w-0 border-x-[4px] border-t-[4px] border-x-transparent ${r.sel ? 'border-t-[#222]' : 'border-t-[#555]'}`} />}
      </div>
      <div className="flex w-[23px] shrink-0 justify-center">
        <Icon name={r.ic} size={r.ic === 'conn' ? 18 : 17} />
      </div>
      <span className="translate-y-px pl-[2px] whitespace-nowrap">{r.t}</span>
    </div>
  )
}

const ScrollBtn = ({ children }: { children: ReactNode }) => (
  <div className="flex h-[14px] w-[14px] shrink-0 items-center justify-center bg-[#f0f0f0]">{children}</div>
)

function Navigator() {
  return (
    <div className="flex h-[339px] flex-col pt-px">
      <DockHeader title="Navegador" />
      <div className="flex h-[31px] items-center gap-[8px] pl-[7px]">
        {['addGroup', 'refresh', 'funnel', 'collapse', 'infoSm'].map((n) => (
          <div key={n} className="flex w-[17px] justify-center">
            <Icon name={n} size={17} />
          </div>
        ))}
      </div>
      <div className="relative flex min-h-0 flex-1 flex-col border border-[#a0a0a0] bg-white">
        <div className="flex min-h-0 flex-1">
          <div className="min-w-0 flex-1 overflow-hidden">
            {tree.map((r) => (
              <TreeRow key={r.t} r={r} />
            ))}
          </div>
          <div className="flex w-[14px] shrink-0 flex-col bg-[#e6e6e6]">
            <ScrollBtn>
              <span className="h-0 w-0 border-x-[4px] border-b-[4px] border-x-transparent border-b-[#333]" />
            </ScrollBtn>
            <div className="h-[52px] border-y border-[#d6d6d6] bg-[#f0f0f0]" />
            <div className="flex-1" />
            <ScrollBtn>
              <span className="h-0 w-0 border-x-[4px] border-t-[4px] border-x-transparent border-t-[#333]" />
            </ScrollBtn>
          </div>
        </div>
        <div className="flex h-[15px] shrink-0 border-t border-[#d6d6d6] bg-[#f0f0f0]">
          <ScrollBtn>
            <span className="h-0 w-0 border-y-[4px] border-r-[4px] border-y-transparent border-r-[#333]" />
          </ScrollBtn>
          <div className="w-[225px] border-x border-[#d6d6d6]" />
          <div className="w-[25px] bg-[#e6e6e6]" />
          <ScrollBtn>
            <span className="h-0 w-0 border-y-[4px] border-l-[4px] border-y-transparent border-l-[#333]" />
          </ScrollBtn>
        </div>
        <div className="absolute left-[56px] top-[135px] flex h-[21px] w-[155px] items-center border border-[#5aa9e6] bg-[#0078d7] pl-[27px] text-white shadow-[2px_2px_3px_rgba(0,0,0,0.45)]">
          Conexión nueva...
        </div>
      </div>
    </div>
  )
}

function Layers() {
  const tools = ['brush', 'addLegend', 'eye', 'funnel', 'filterLegend', 'expand', 'collapse', 'removeLayer']
  return (
    <div className="flex min-h-0 flex-1 flex-col">
      <div className="flex h-[5px] items-center justify-center pt-[1px]">
        <div className="h-[2px] w-[16px] bg-[radial-gradient(circle,#b5b5b5_0.7px,transparent_1px)] bg-[length:3px_2px]" />
      </div>
      <DockHeader title="Capas" />
      <div className="flex h-[31px] items-center pl-[7px]">
        {tools.map((n) => (
          <div key={n} className="flex items-center">
            <div className="flex w-[17px] justify-center">
              <Icon name={n} size={n === 'removeLayer' ? 16 : 17} />
            </div>
            {n === 'filterLegend' ? (
              <div className="flex w-[19px] justify-center">
                <Caret />
              </div>
            ) : (
              <div className="w-[8px]" />
            )}
          </div>
        ))}
      </div>
      <div className="min-h-0 flex-1 border border-[#a0a0a0] bg-white">
        <div className="flex h-[17px] items-center bg-[#f4f4f4] pl-[24px]">
          <div className="flex h-[13px] w-[13px] items-center justify-center border border-[#666] bg-white text-[12px] font-bold leading-none">✓</div>
          <div className="ml-[7px] h-[2px] w-[16px] bg-[#4a7fbe]" />
          <span className="ml-[5px] translate-y-px font-bold underline">mf_isoyetas_din</span>
        </div>
      </div>
    </div>
  )
}

const Spin = () => (
  <div className="flex w-[14px] flex-col items-center justify-center gap-[2px] border-l border-[#ccc]">
    <span className="h-0 w-0 border-x-[3px] border-b-[4px] border-x-transparent border-b-[#555]" />
    <span className="h-0 w-0 border-x-[3px] border-t-[4px] border-x-transparent border-t-[#555]" />
  </div>
)

function StatusBar() {
  return (
    <div className="flex h-[26px] shrink-0 items-center whitespace-nowrap pl-[4px] pt-[2px] text-[11px] [&>*]:shrink-0">
      <div className="flex h-[21px] w-[253px] items-center gap-[7px] rounded-[2px] border border-[#b4b4b4] bg-white pl-[6px] text-[#777]">
        <Search size={14} color="#888" />
        <span>Escriba para localizar (Ctrl+K)</span>
      </div>
      <span className="ml-[8px] w-[238px]">Alterna el estado de edición de la capa activa</span>
      <span className="w-[62px]">Coordenada</span>
      <div className="flex h-[21px] w-[97px] items-center justify-center border border-[#b4b4b4] bg-white">869261,953914</div>
      <div className="ml-[3px] w-[29px]"><Icon name="render" size={18} /></div>
      <span className="w-[34px]">Escala</span>
      <div className="flex h-[21px] w-[80px] items-center justify-between border border-[#b4b4b4] bg-white pl-[3px] pr-[6px]">
        1:826254
        <Caret />
      </div>
      <div className="ml-[11px] w-[22px]"><Icon name="lock" size={16} /></div>
      <span className="w-[62px]">Amplificador</span>
      <div className="flex h-[21px] w-[87px] items-stretch justify-between border border-[#b4b4b4] bg-white">
        <span className="self-center pl-[3px]">100%</span>
        <Spin />
      </div>
      <span className="ml-[9px] w-[52px]">Rotación</span>
      <div className="flex h-[21px] w-[84px] items-stretch justify-between border border-[#b4b4b4] bg-white">
        <span className="self-center pl-[3px]">0,0 °</span>
        <Spin />
      </div>
      <div className="ml-[7px] flex h-[13px] w-[13px] items-center justify-center border border-[#666] bg-white text-[12px] font-bold leading-none">✓</div>
      <span className="ml-[4px] w-[78px]">Representar</span>
      <div className="w-[19px]"><Icon name="crs" size={15} /></div>
      <span className="w-[86px]">Unknown CRS</span>
      <Icon name="pluginMsg" size={19} />
    </div>
  )
}

export default function App() {
  return (
    <div className={`flex h-[768px] w-[1366px] flex-col overflow-hidden bg-[#f0f0f0] text-[12px] leading-none text-[#111] ${FONT}`}>
      <div className="flex h-[23px] shrink-0 items-center bg-white">
        <svg width="16" height="16" viewBox="0 0 16 16" className="ml-[3px]">
          <circle cx="8" cy="8" r="5.500" fill="#f2f2e6" stroke="#6aa84f" strokeWidth="3" />
          <path d="M9 9l5 5" stroke="#6aa84f" strokeWidth="3" />
          <circle cx="8" cy="8" r="2" fill="#e8743b" />
        </svg>
        <span className="ml-[4px]">*Proyecto sin título - QGIS</span>
        <div className="ml-auto flex items-center">
          <div className="h-px w-[10px] bg-[#111]" />
          <svg width="11" height="11" viewBox="0 0 11 11" className="ml-[35px]">
            <path d="M.5 2.500h8v8h-8zM2.500 2.500v-2h8v8h-2" fill="none" stroke="#111" />
          </svg>
          <svg width="11" height="11" viewBox="0 0 11 11" className="ml-[35px] mr-[20px]">
            <path d="M.5.5l10 10M10.500.5l-10 10" stroke="#111" />
          </svg>
        </div>
      </div>
      <div className="flex h-[19px] shrink-0 items-center pl-[10px]">
        {menus.map(([a, b, c, w]) => (
          <span key={a + b + c} className="whitespace-pre" style={{ width: w }}>
            {a}
            <span className="underline">{b}</span>
            {c}
          </span>
        ))}
      </div>
      <div className="h-[40px] shrink-0 border-y border-[#c8c8c8] bg-[#f8f8f8]">
        <ToolRow tools={row1} />
      </div>
      <div className="h-[39px] shrink-0 border-b border-[#b4b4b4] bg-[#f6f6f6] pb-px">
        <ToolRow tools={row2} />
      </div>
      <div className="flex min-h-0 flex-1">
        <div className="flex w-[294px] shrink-0 flex-col">
          <Navigator />
          <Layers />
        </div>
        <div className="ml-[6px] min-w-0 flex-1 border border-[#a0a0a0] bg-white">
          <svg width="1064" height="617" viewBox="301 122 1064 617" className="block">
            {isolines.map((p, i) => (
              <path key={i} d={smooth(p)} fill="none" stroke="#3f77b7" strokeWidth="2.400" strokeLinecap="butt" />
            ))}
          </svg>
        </div>
      </div>
      <StatusBar />
      <div className="flex h-[2px] shrink-0">
        <div className="w-[36px] bg-[#333]" />
        <div className="w-[264px] bg-[#777]" />
        <div className="w-[460px] bg-[#333]" />
        <div className="flex-1 bg-[#555]" />
      </div>
    </div>
  )
}
